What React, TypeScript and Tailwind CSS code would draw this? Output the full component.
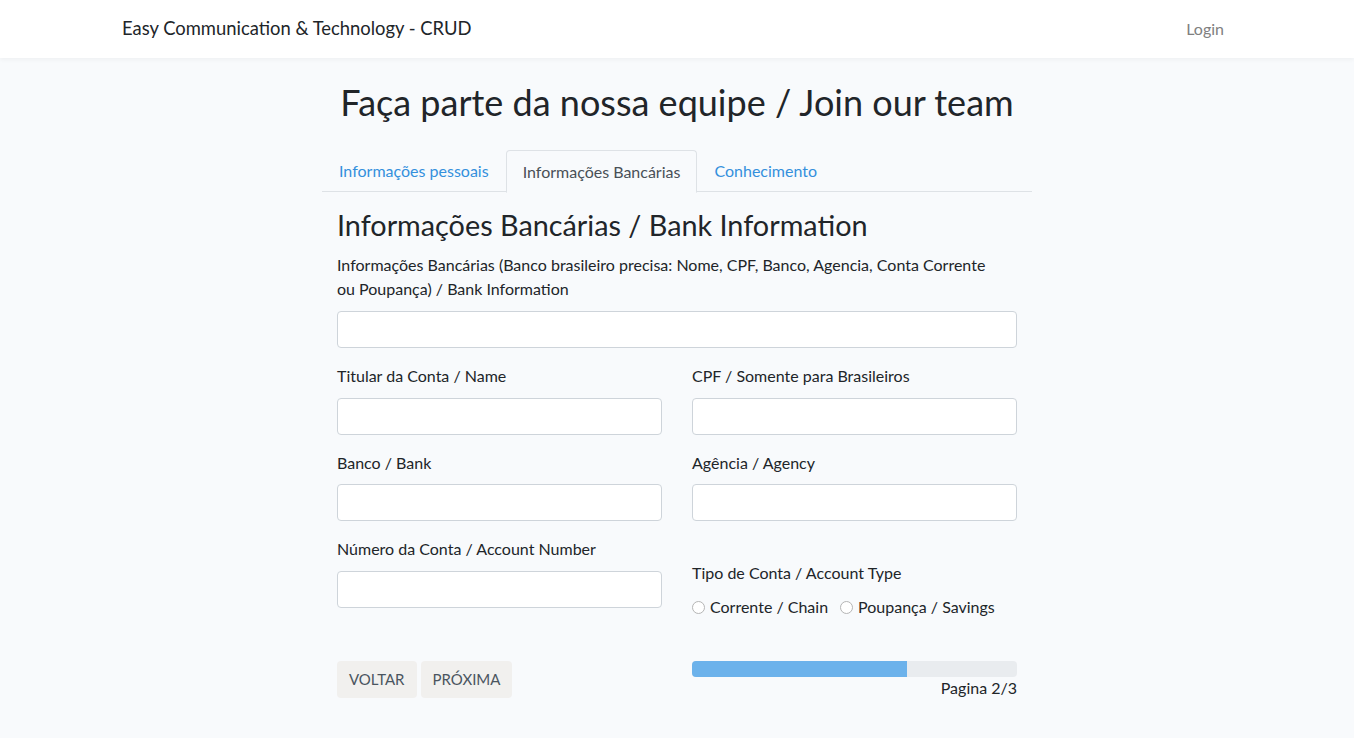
import React from "react";

const font = { fontFamily: "Lato, 'Noto Sans', sans-serif" };

function Field({ label }: { label: string }) {
  return (
    <div className="mb-[16px]">
      <div className="h-[24px] leading-[24px] mb-[9.5px]">{label}</div>
      <div className="h-[37px] bg-white border border-[#ced4da] rounded-[4px]" />
    </div>
  );
}

function Radio({ label }: { label: string }) {
  return (
    <label className="flex items-center gap-[5px]">
      <span className="w-[13px] h-[13px] rounded-full border border-[#b5b5b5] bg-white inline-block" />
      <span>{label}</span>
    </label>
  );
}

export default function App() {
  return (
    <div className="min-h-[738px] bg-[#f8fafc] text-[#212529] text-[16px]" style={font}>
      <nav className="h-[58px] bg-white shadow-[0_2px_4px_rgba(0,0,0,0.04)] flex items-center">
        <div className="w-[1110px] mx-auto flex items-center justify-between">
          <span className="text-[18.4px] text-[#212529]">Easy Communication &amp; Technology - CRUD</span>
          <span className="text-[#808080] text-[16px] mr-[8px]">Login</span>
        </div>
      </nav>

      <div className="w-[710px] mx-auto">
        <h1 className="text-[36px] leading-[43px] text-center mt-[23px] mb-[26px]">
          Faça parte da nossa equipe / Join our team
        </h1>

        <div className="flex border-b border-[#dee2e6] h-[42px]">
          <div className="px-[17px] h-[42px] flex items-center text-[#3490dc]">Informações pessoais</div>
          <div className="px-[16px] h-[43px] flex items-center text-[#495057] border border-[#dee2e6] border-b-[#f8fafc] rounded-t-[4px] bg-[#f8fafc]">
            Informações Bancárias
          </div>
          <div className="px-[17px] h-[42px] flex items-center text-[#3490dc]">Conhecimento</div>
        </div>

        <div className="px-[15px]">
          <h2 className="text-[28.8px] leading-[35px] mt-[16px] mb-[10px]">
            Informações Bancárias / Bank Information
          </h2>
          <div className="mb-[16px]">
            <div className="leading-[24px] mb-[10px] max-w-[660px]">
              Informações Bancárias (Banco brasileiro precisa: Nome, CPF, Banco, Agencia, Conta Corrente ou Poupança) / Bank Information
            </div>
            <div className="h-[37px] bg-white border border-[#ced4da] rounded-[4px]" />
          </div>

          <div className="grid grid-cols-2 gap-x-[30px]">
            <Field label="Titular da Conta / Name" />
            <Field label="CPF / Somente para Brasileiros" />
            <Field label="Banco / Bank" />
            <Field label="Agência / Agency" />
            <Field label="Número da Conta / Account Number" />
            <div>
              <div className="h-[24px]" />
              <div className="h-[24px] leading-[24px] mb-[10px]">Tipo de Conta / Account Type</div>
              <div className="flex gap-[12px] h-[24px] items-center">
                <Radio label="Corrente / Chain" />
                <Radio label="Poupança / Savings" />
              </div>
            </div>
          </div>

          <div className="grid grid-cols-2 gap-x-[30px] mt-[37px]">
            <div className="flex gap-[4px]">
              <button className="h-[37px] px-[12px] rounded-[4px] bg-[#f1f0ee] text-[#4a5560] text-[15px] uppercase">Voltar</button>
              <button className="h-[37px] px-[12px] rounded-[4px] bg-[#f1f0ee] text-[#4a5560] text-[15px] uppercase">Próxima</button>
            </div>
            <div>
              <div className="h-[16px] rounded-[4px] bg-[#e9ecef] overflow-hidden">
                <div className="h-full bg-[#6cb2eb]" style={{ width: "66.2%" }} />
              </div>
              <div className="text-right leading-[22px]">Pagina 2/3</div>
            </div>
          </div>
        </div>
      </div>
    </div>
  );
}
